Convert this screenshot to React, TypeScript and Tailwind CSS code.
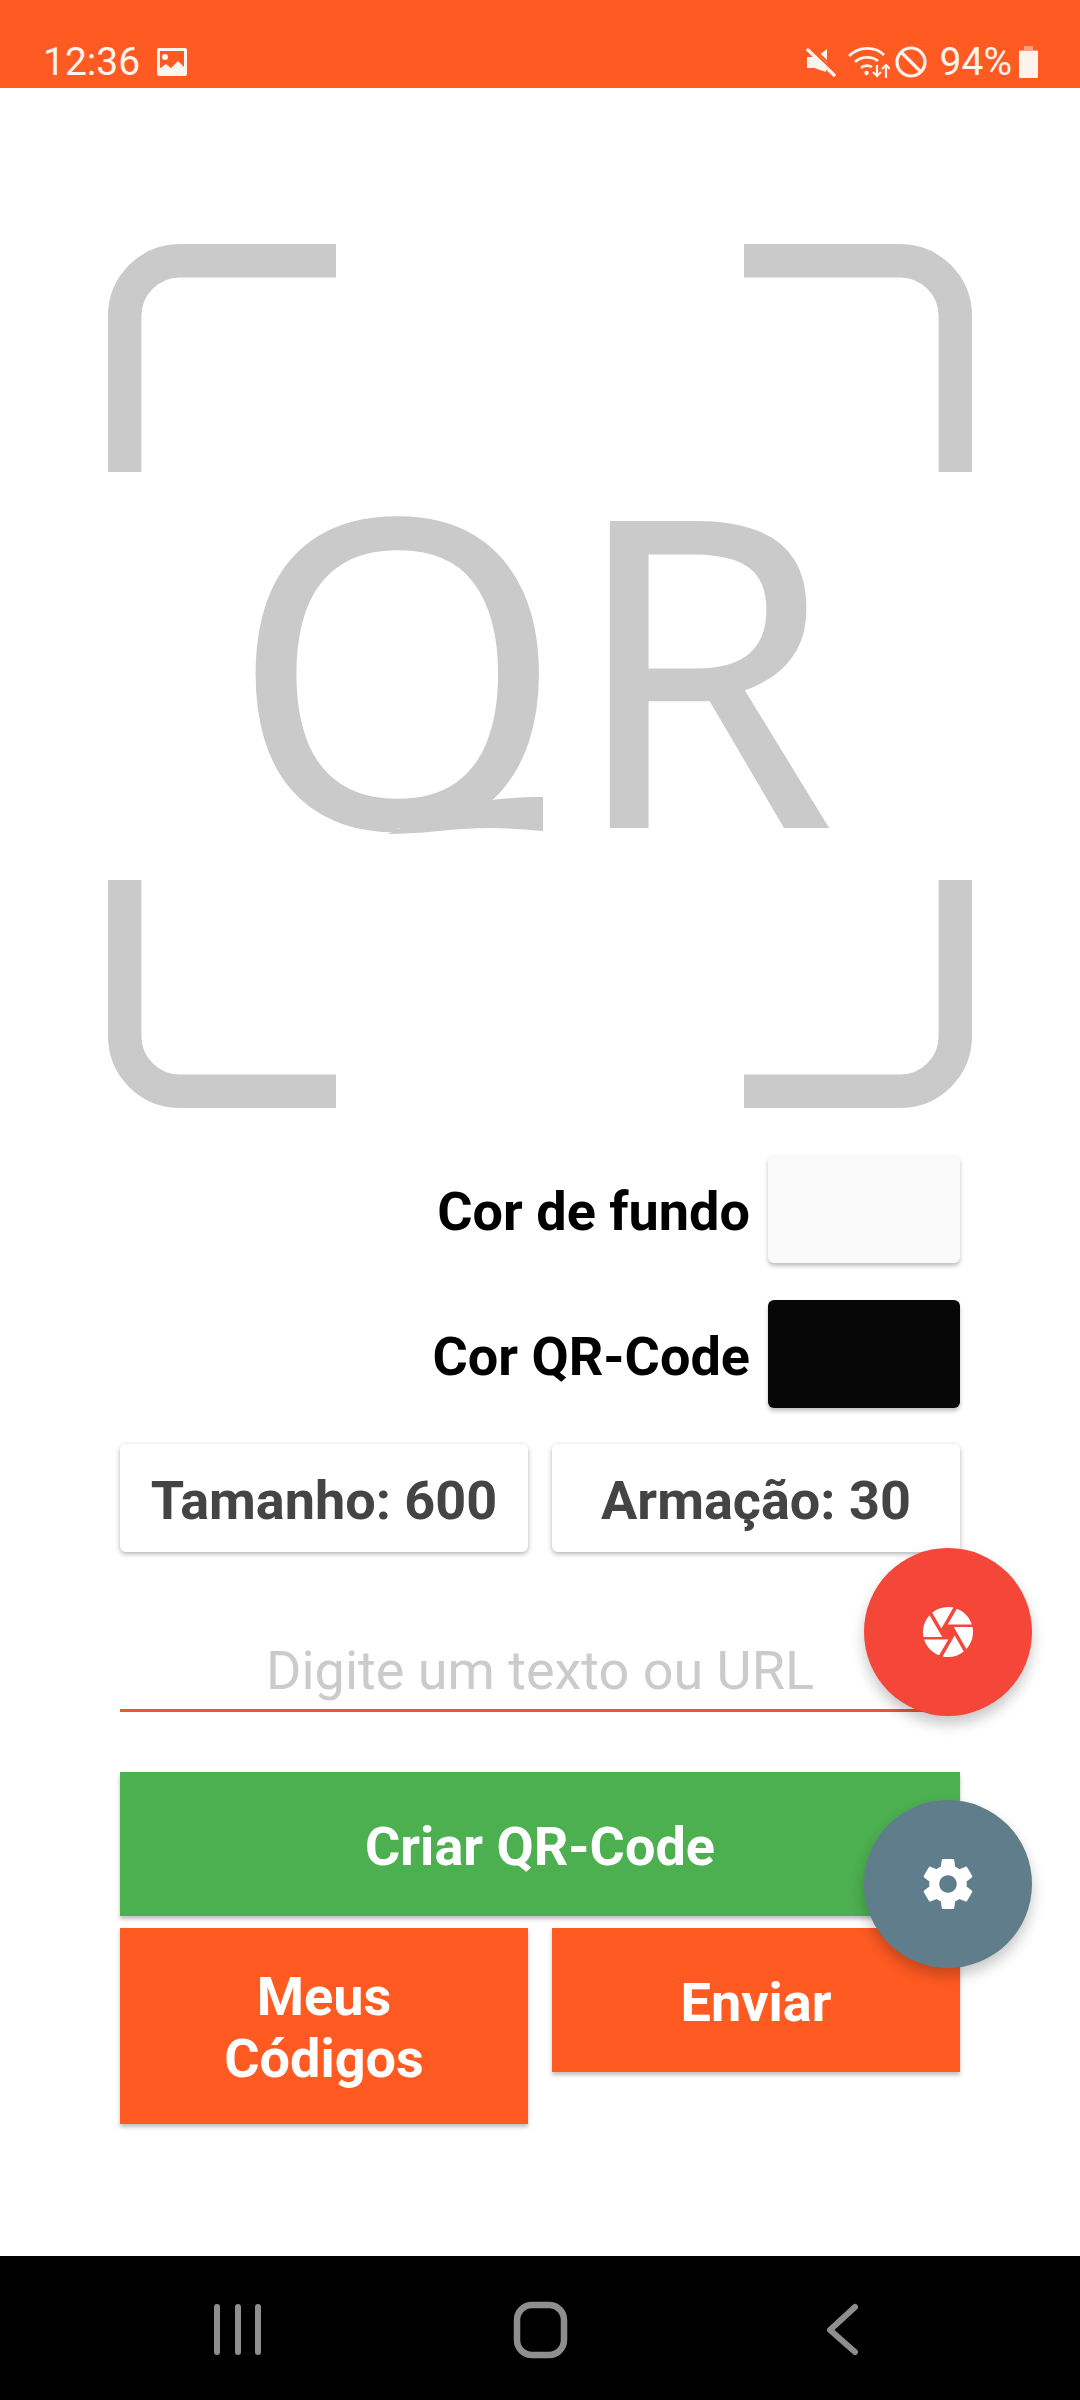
const ORANGE_BTN = 'bg-[#ff5a22] text-white shadow-[0_3px_4px_rgba(0,0,0,0.25)]'

function StatusBar() {
  return (
    <div className="flex h-[88px] shrink-0 items-end justify-between bg-[#ff5a22] pb-[4px] pl-[43px] pr-[41px] text-[#fff3ee]">
      <div className="flex items-center gap-[16px]">
        <span className="text-[39px] leading-[44px]">12:36</span>
        <svg width="32" height="30" viewBox="0 0 32 30" fill="currentColor">
          <path
            fillRule="evenodd"
            d="M3 1h26a2 2 0 0 1 2 2v24a2 2 0 0 1-2 2H3a2 2 0 0 1-2-2V3a2 2 0 0 1 2-2zm1 3v22h24V4z"
          />
          <circle cx="9" cy="10" r="3" />
          <path d="M3 27v-5l7-5 5 4 7-7 7 7v6z" />
        </svg>
      </div>
      <div className="flex items-center">
        <svg width="30" height="30" viewBox="0 0 30 30" fill="currentColor" className="mr-[12px]">
          <path d="M1 10h7l12 12v3L8 21H1zM13 8l8-6v14z" />
          <path d="M2 3l26 25" stroke="currentColor" strokeWidth="3.500" strokeLinecap="round" />
          <path d="M6 0l24 23" stroke="#ff5a22" strokeWidth="2" />
        </svg>
        <svg width="42" height="34" viewBox="0 0 42 34" fill="none" stroke="currentColor" strokeWidth="2.600" className="mr-[5px]">
          <path d="M1 11C11 1 27 1 36 10" />
          <path d="M7 17c6-6 17-6 23-1" />
          <path d="M13 23c3-3 8-3 11-1" />
          <circle cx="18.500" cy="28" r="2.200" fill="currentColor" stroke="none" />
          <path d="M29 20v11M25 27l4 4 4-4M38 33V20M34 24l4-4 4 4" strokeWidth="2.200" />
        </svg>
        <svg width="32" height="32" viewBox="0 0 32 32" fill="none" stroke="currentColor" strokeWidth="3.200" className="mr-[13px]">
          <circle cx="16" cy="16" r="14" />
          <path d="M6 6l20 20" />
        </svg>
        <span className="mr-[6px] text-[39px] leading-[44px]">94%</span>
        <svg width="21" height="32" viewBox="0 0 21 32" fill="currentColor">
          <path d="M6 0h9v4H6z" opacity="0.45" />
          <path d="M1 4h19v1H1z" opacity="0.45" />
          <path d="M1 5h19v26a1 1 0 0 1-1 1H2a1 1 0 0 1-1-1z" />
        </svg>
      </div>
    </div>
  )
}

function QrLogo() {
  return (
    <svg width="864" height="864" viewBox="0 0 864 864" className="ml-[108px] mt-[156px] block shrink-0">
      <defs>
        {/* the logo's Q has a flat tail, so the font's own tail is cut off below the bowl */}
        <clipPath id="q-body">
          <path d="M0 0H864V584H290V590H0Z" />
        </clipPath>
      </defs>
      <g fill="none" stroke="#cacaca" strokeWidth="33.400">
        <path d="M16.700 228V72a55.300 55.300 0 0 1 55.300-55.300h156" />
        <path d="M847.300 228V72a55.300 55.300 0 0 0-55.300-55.300H636" />
        <path d="M16.700 636v156a55.300 55.300 0 0 0 55.300 55.300h156" />
        <path d="M847.300 636v156a55.300 55.300 0 0 1-55.300 55.300H636" />
      </g>
      <text
        x="426"
        y="584"
        textAnchor="middle"
        fill="#cacaca"
        fontSize="430"
        letterSpacing="3"
        clipPath="url(#q-body)"
        style={{ fontFamily: '"Noto Sans", sans-serif' }}
      >
        QR
      </text>
      <path fill="#cacaca" d="M365 559C385 555 410 553 435 553V587C405 584 380 583 355 585C335 586 310 590 280 590L330 565Z" />
    </svg>
  )
}

function ColorRow({ label, color }: { label: string; color: string }) {
  return (
    <div className="flex items-center justify-end gap-[18px]">
      <span className="pt-[6px] text-[54px] font-bold leading-[62px] text-black">{label}</span>
      <div className={`h-[108px] w-[192px] rounded-[6px] shadow-[0_3px_4px_rgba(0,0,0,0.25)] ${color}`} />
    </div>
  )
}

function ValueButton({ children }: { children: string }) {
  return (
    <button className="flex h-[108px] items-center justify-center rounded-[6px] bg-white pt-[6px] text-[54px] font-bold leading-[62px] text-[#444444] shadow-[0_2px_5px_rgba(0,0,0,0.3)]">
      {children}
    </button>
  )
}

export default function App() {
  return (
    <div className="relative flex h-[2400px] w-[1080px] flex-col overflow-hidden bg-white" style={{ fontFamily: 'Roboto, sans-serif' }}>
      <StatusBar />
      <div className="flex-1">
        <QrLogo />
        <div className="mx-[120px] mt-[47px]">
          <ColorRow label="Cor de fundo" color="bg-[#fafafa]" />
          <div className="mt-[37px]">
            <ColorRow label="Cor QR-Code" color="bg-[#070707]" />
          </div>
          <div className="mt-[36px] grid grid-cols-2 gap-[24px]">
            <ValueButton>Tamanho: 600</ValueButton>
            <ValueButton>Armação: 30</ValueButton>
          </div>
          <div className="mt-[92px] flex h-[52px] items-center justify-center text-[54px] text-[#cbcbcb]">
            Digite um texto ou URL
          </div>
          <div className="mt-[13px] h-[3px] bg-[#e65a2a]" />
          <button className="mt-[60px] flex h-[144px] w-full items-center justify-center bg-[#4caf50] pt-[4px] text-[54px] font-bold text-white shadow-[0_3px_4px_rgba(0,0,0,0.25)]">
            Criar QR-Code
          </button>
          <div className="mt-[12px] grid grid-cols-2 items-start gap-[24px]">
            <button className={`h-[196px] pt-[4px] text-[54px] font-bold leading-[62px] ${ORANGE_BTN}`}>
              Meus
              <br />
              Códigos
            </button>
            <button className={`h-[144px] pt-[4px] text-[54px] font-bold ${ORANGE_BTN}`}>Enviar</button>
          </div>
        </div>
      </div>
      <div className="flex h-[144px] shrink-0 items-center bg-black pt-[4px]">
        <svg width="1080" height="60" viewBox="0 0 1080 60" fill="none" stroke="#8e8e8e" strokeLinecap="round" strokeLinejoin="round">
          <path d="M217 7v45M238 7v45M258 7v45" strokeWidth="6" />
          <rect x="517" y="5" width="47" height="50" rx="15" strokeWidth="6.500" />
          <path d="M855 7l-25 23 25 22" strokeWidth="6" />
        </svg>
      </div>
      <button className="absolute left-[864px] top-[1548px] flex h-[168px] w-[168px] items-center justify-center rounded-full bg-[#f44639] shadow-[0_8px_14px_rgba(0,0,0,0.22)]">
        <svg width="60" height="60" viewBox="0 0 24 24" fill="white">
          <path d="M9.4 10.5l4.77-8.26C13.47 2.09 12.75 2 12 2c-2.4 0-4.6.85-6.32 2.25l3.66 6.35.06-.1zM21.54 9c-.92-2.92-3.15-5.26-6-6.34L11.88 9h9.66zm.26 1h-7.49l.29.5 4.76 8.25C21 16.97 22 14.61 22 12c0-.69-.07-1.35-.2-2zM8.54 12l-3.9-6.75C3.01 7.03 2 9.39 2 12c0 .69.07 1.35.2 2h7.49l-1.15-2zm-6.08 3c.92 2.92 3.15 5.26 6 6.34L12.12 15H2.46zm11.27 0l-3.9 6.76c.7.15 1.42.24 2.17.24 2.4 0 4.6-.85 6.32-2.25l-3.66-6.35-.93 1.6z" />
        </svg>
      </button>
      <button className="absolute left-[864px] top-[1800px] flex h-[168px] w-[168px] items-center justify-center rounded-full bg-[#607d8b] shadow-[0_8px_14px_rgba(0,0,0,0.22)]">
        <svg width="60" height="60" viewBox="0 0 24 24" fill="white">
          <path d="M19.43 12.98c.04-.32.07-.64.07-.98s-.03-.66-.07-.98l2.11-1.65c.19-.15.24-.42.12-.64l-2-3.46c-.12-.22-.39-.3-.61-.22l-2.49 1c-.52-.4-1.08-.73-1.69-.98l-.38-2.65C14.46 2.18 14.25 2 14 2h-4c-.25 0-.46.18-.49.42l-.38 2.65c-.61.25-1.17.59-1.69.98l-2.49-1c-.23-.09-.49 0-.61.22l-2 3.46c-.13.22-.07.49.12.64l2.11 1.65c-.04.32-.07.65-.07.98s.03.66.07.98l-2.11 1.65c-.19.15-.24.42-.12.64l2 3.46c.12.22.39.3.61.22l2.49-1c.52.4 1.08.73 1.69.98l.38 2.65c.03.24.24.42.49.42h4c.25 0 .46-.18.49-.42l.38-2.65c.61-.25 1.17-.59 1.69-.98l2.49 1c.23.09.49 0 .61-.22l2-3.46c.12-.22.07-.49-.12-.64l-2.11-1.65zM12 15.5c-1.93 0-3.5-1.57-3.5-3.5s1.57-3.5 3.5-3.5 3.5 1.57 3.5 3.5-1.57 3.5-3.5 3.5z" />
        </svg>
      </button>
    </div>
  )
}
